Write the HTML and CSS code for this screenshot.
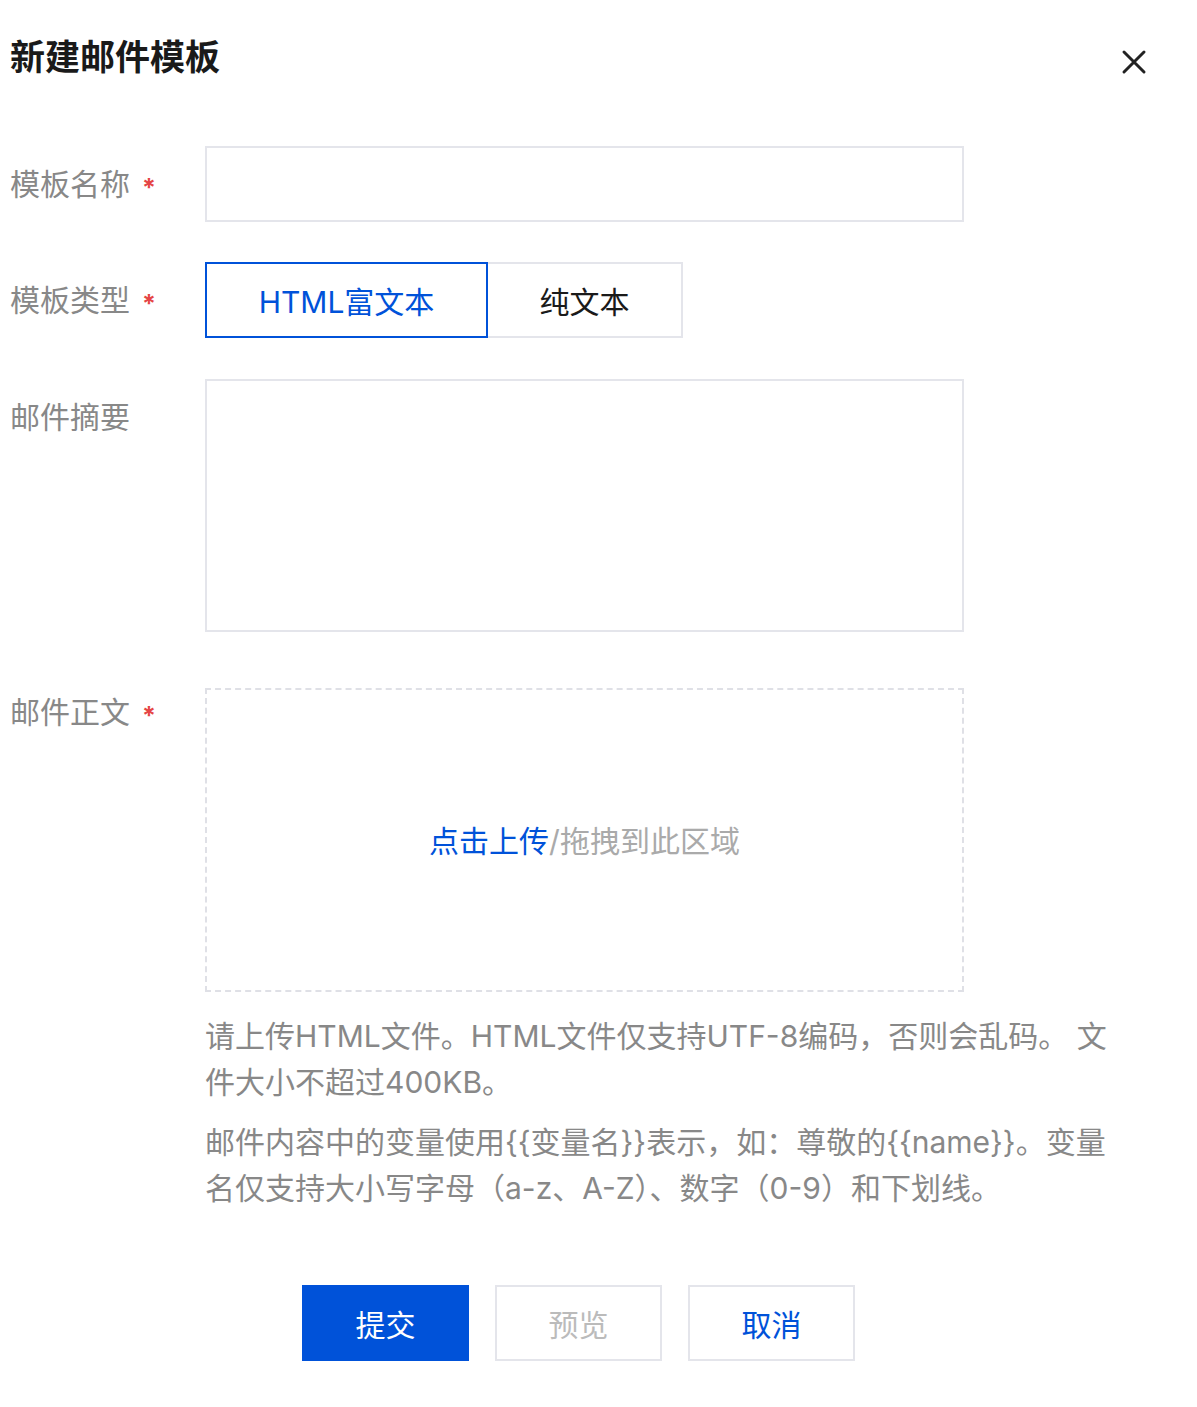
FILE: index.html
```html
<!DOCTYPE html>
<html lang="zh-CN">
  <head>
    <meta charset="UTF-8" />
    <meta name="viewport" content="width=device-width, initial-scale=1.0" />
    <title>新建邮件模板</title>
    <link rel="stylesheet" href="styles.css">
  </head>
  <body>
    <div class="dialog">
      <div class="dialog-header">
        <h1>新建邮件模板</h1>
        <button class="close-btn" aria-label="关闭">
          <svg width="26" height="26" viewBox="0 0 26 26">
            <path d="M3 3 L23 23 M23 3 L3 23" stroke="#222" stroke-width="3" stroke-linecap="round" fill="none" />
          </svg>
        </button>
      </div>

      <form class="form">
        <div class="form-row">
          <label class="form-label">模板名称<span class="required">*</span></label>
          <div class="form-field">
            <input class="text-input" type="text" />
          </div>
        </div>

        <div class="form-row row-type">
          <label class="form-label">模板类型<span class="required">*</span></label>
          <div class="form-field">
            <div class="segmented">
              <button type="button" class="segment active">HTML富文本</button>
              <button type="button" class="segment">纯文本</button>
            </div>
          </div>
        </div>

        <div class="form-row row-summary">
          <label class="form-label">邮件摘要</label>
          <div class="form-field">
            <textarea class="text-area"></textarea>
          </div>
        </div>

        <div class="form-row row-body">
          <label class="form-label label-top">邮件正文<span class="required">*</span></label>
          <div class="form-field">
            <div class="upload-area">
              <span class="upload-link">点击上传</span><span class="upload-tip">/拖拽到此区域</span>
            </div>
            <p class="help">请上传HTML文件。HTML文件仅支持UTF-8编码，否则会乱码。 文件大小不超过400KB。</p>
            <p class="help help-second">邮件内容中的变量使用{{变量名}}表示，如：尊敬的{{name}}。变量名仅支持大小写字母（a-z、A-Z）、数字（0-9）和下划线。</p>
          </div>
        </div>

        <div class="form-actions">
          <button type="button" class="btn btn-primary">提交</button>
          <button type="button" class="btn btn-disabled">预览</button>
          <button type="button" class="btn btn-default">取消</button>
        </div>
      </form>
    </div>
  </body>
</html>
```

FILE: styles.css
```css
body {
  margin: 0;
  font-family: Inter, "Noto Sans CJK SC", sans-serif;
  background-color: #fff;
  color: #222;
}

.dialog {
  padding: 0 10px;
}

.dialog-header {
  display: flex;
  justify-content: space-between;
  align-items: flex-start;
  padding-top: 37px;
}

.dialog-header h1 {
  margin: 0;
  font-size: 35px;
  line-height: 40px;
  font-weight: bold;
  color: #1a1a1a;
}

.close-btn {
  margin: 12px 40px 0 0;
  padding: 0;
  border: none;
  background: none;
  cursor: pointer;
  display: flex;
}

.form {
  margin-top: 69px;
}

.form-row {
  display: grid;
  grid-template-columns: 195px 920px;
  align-items: start;
  margin-bottom: 40px;
}

.row-type {
  margin-bottom: 41px;
}

.row-summary {
  margin-bottom: 56px;
}

.row-body {
  margin-bottom: 74px;
}

.form-label {
  height: 76px;
  font-size: 30px;
  line-height: 76px;
  color: #888;
  white-space: nowrap;
}

.label-top {
  height: 48px;
  line-height: 48px;
}

.required {
  color: #e54545;
  font-size: 25px;
  font-weight: bold;
  line-height: 0;
  margin-left: 12px;
  vertical-align: -2px;
}

.text-input {
  box-sizing: border-box;
  display: block;
  width: 759px;
  height: 76px;
  border: 2px solid #e4e5eb;
  border-radius: 0;
  padding: 0 20px;
  font-family: inherit;
  font-size: 29px;
  outline: none;
}

.segmented {
  display: flex;
}

.segment {
  box-sizing: border-box;
  height: 76px;
  border: 2px solid #e4e5eb;
  background-color: #fff;
  font-family: inherit;
  font-size: 30px;
  color: #1a1a1a;
  padding: 0;
  cursor: pointer;
}

.segment.active {
  width: 283px;
  border-color: #0052d9;
  color: #0052d9;
}

.segment + .segment {
  width: 195px;
  border-left: none;
}

.text-area {
  box-sizing: border-box;
  display: block;
  width: 759px;
  height: 253px;
  border: 2px solid #e4e5eb;
  padding: 16px 20px;
  font-family: inherit;
  font-size: 29px;
  resize: none;
  outline: none;
}

.upload-area {
  box-sizing: border-box;
  width: 759px;
  height: 304px;
  border: 2px dashed #dfe0e6;
  display: flex;
  justify-content: center;
  align-items: center;
  font-size: 30px;
  padding-bottom: 2px;
}

.upload-link {
  color: #0052d9;
  cursor: pointer;
}

.upload-tip {
  color: #aaa;
}

.help {
  margin: 21px 0 0;
  width: 915px;
  font-size: 30px;
  line-height: 46px;
  color: #888;
}

.help-second {
  margin-top: 14px;
}

.form-actions {
  display: flex;
  gap: 26px;
  padding-left: 292px;
}

.btn {
  box-sizing: border-box;
  width: 167px;
  height: 76px;
  border: 2px solid #e4e5eb;
  background-color: #fff;
  font-family: inherit;
  font-size: 30px;
  cursor: pointer;
}

.btn-primary {
  background-color: #0052d9;
  border-color: #0052d9;
  color: #fff;
}

.btn-disabled {
  color: #bbb;
  cursor: not-allowed;
}

.btn-default {
  color: #0052d9;
}
```
